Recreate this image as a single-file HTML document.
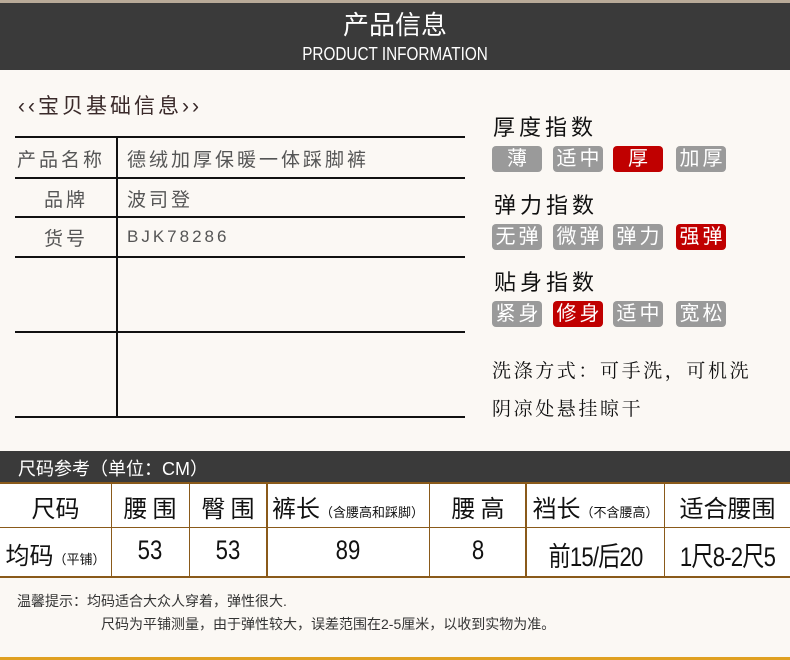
<!DOCTYPE html>
<html><head><meta charset="utf-8"><style>
*{margin:0;padding:0;box-sizing:border-box}
body{width:790px;height:660px;background:#fbf8f4;position:relative;overflow:hidden;font-family:"Liberation Sans","Noto Sans CJK SC",sans-serif}
.a{position:absolute;white-space:nowrap}
.hl{position:absolute;height:2px;background:#111}
.vl{position:absolute;width:2px;background:#111}
.tag{position:absolute;width:50px;height:26px;border-radius:4px;background:#9a9a9a;color:#fff;font-size:20px;line-height:26px;text-align:center;letter-spacing:3px;padding-left:3px}
.r{background:#c00000}
.tt{position:absolute;font-size:22px;letter-spacing:4px;color:#111}
.bh{position:absolute;background:#8a5a1a}
.c{position:absolute;text-align:center;font-size:24px;color:#111;white-space:nowrap}
.n{font-size:27px;transform:scaleX(.82)}
.s{font-size:13px}
</style></head><body>
<div class="a" style="left:0;top:0;width:790px;height:3px;background:#b8aa98"></div>
<div class="a" style="left:0;top:3px;width:790px;height:67px;background:#3a3a3a"></div>
<div class="a" style="left:0;top:5px;width:790px;text-align:center;color:#fff;font-size:26px">产品信息</div>
<div class="a" style="left:0;top:44px;width:790px;text-align:center;color:#fff;font-size:18px;transform:scaleX(.85)">PRODUCT INFORMATION</div>

<div class="a" style="left:18px;top:90px;font-size:21px;color:#3a2a2a;letter-spacing:3px">‹‹宝贝基础信息››</div>

<div class="hl" style="left:15px;top:136px;width:450px"></div>
<div class="hl" style="left:15px;top:177px;width:450px"></div>
<div class="hl" style="left:15px;top:216px;width:450px"></div>
<div class="hl" style="left:15px;top:256px;width:450px"></div>
<div class="hl" style="left:15px;top:331px;width:450px"></div>
<div class="hl" style="left:15px;top:416px;width:450px"></div>
<div class="vl" style="left:116px;top:136px;height:282px"></div>
<div class="a" style="left:17px;top:145px;font-size:19px;color:#555;letter-spacing:3px">产品名称</div>
<div class="a" style="left:127px;top:145px;font-size:19px;color:#555;letter-spacing:3px">德绒加厚保暖一体踩脚裤</div>
<div class="a" style="left:44px;top:185px;font-size:19px;color:#555;letter-spacing:3px">品牌</div>
<div class="a" style="left:127px;top:185px;font-size:19px;color:#555;letter-spacing:3px">波司登</div>
<div class="a" style="left:44px;top:224px;font-size:19px;color:#555;letter-spacing:3px">货号</div>
<div class="a" style="left:127px;top:227px;font-size:17px;color:#555;letter-spacing:3px">BJK78286</div>

<div class="tt" style="left:493px;top:110px">厚度指数</div>
<div class="tag" style="left:492px;top:146px">薄</div>
<div class="tag" style="left:553px;top:146px">适中</div>
<div class="tag r" style="left:613px;top:146px">厚</div>
<div class="tag" style="left:676px;top:146px">加厚</div>
<div class="tt" style="left:494px;top:188px">弹力指数</div>
<div class="tag" style="left:492px;top:224px">无弹</div>
<div class="tag" style="left:553px;top:224px">微弹</div>
<div class="tag" style="left:613px;top:224px">弹力</div>
<div class="tag r" style="left:676px;top:224px">强弹</div>
<div class="tt" style="left:494px;top:265px">贴身指数</div>
<div class="tag" style="left:492px;top:301px">紧身</div>
<div class="tag r" style="left:553px;top:301px">修身</div>
<div class="tag" style="left:613px;top:301px">适中</div>
<div class="tag" style="left:676px;top:301px">宽松</div>
<div class="a" style="left:492px;top:356px;font-family:'Liberation Serif','Noto Serif CJK SC',serif;font-size:19px;letter-spacing:2.6px;color:#111">洗涤方式：可手洗，可机洗</div>
<div class="a" style="left:492px;top:394px;font-family:'Liberation Serif','Noto Serif CJK SC',serif;font-size:19px;letter-spacing:2.6px;color:#111">阴凉处悬挂晾干</div>

<div class="a" style="left:0;top:451px;width:790px;height:31px;background:#3a3a3a"></div>
<div class="a" style="left:18px;top:455px;color:#fff;font-size:18px">尺码参考（单位：CM）</div>
<div class="a" style="left:0;top:482px;width:790px;height:95px;background:#fff"></div>
<div class="bh" style="left:0;top:482px;width:790px;height:2px"></div>
<div class="bh" style="left:0;top:527px;width:790px;height:1px"></div>
<div class="bh" style="left:0;top:576px;width:790px;height:2px"></div>
<div class="bh" style="left:111px;top:482px;width:1px;height:95px"></div>
<div class="bh" style="left:189px;top:482px;width:1px;height:95px"></div>
<div class="bh" style="left:266px;top:482px;width:2px;height:95px"></div>
<div class="bh" style="left:429px;top:482px;width:1px;height:95px"></div>
<div class="bh" style="left:525px;top:482px;width:2px;height:95px"></div>
<div class="bh" style="left:664px;top:482px;width:1px;height:95px"></div>
<div class="c" style="left:0;top:489px;width:111px">尺码</div>
<div class="c" style="left:111px;top:489px;width:78px;letter-spacing:5px;padding-left:5px">腰围</div>
<div class="c" style="left:189px;top:489px;width:78px;letter-spacing:5px;padding-left:5px">臀围</div>
<div class="c" style="left:267px;top:489px;width:162px">裤长<span class="s">（含腰高和踩脚）</span></div>
<div class="c" style="left:430px;top:489px;width:96px;letter-spacing:5px;padding-left:5px">腰高</div>
<div class="c" style="left:527px;top:489px;width:137px">裆长<span class="s">（不含腰高）</span></div>
<div class="c" style="left:665px;top:489px;width:125px">适合腰围</div>
<div class="c" style="left:0;top:536px;width:111px">均码<span class="s">（平铺）</span></div>
<div class="c n" style="left:111px;top:535px;width:78px">53</div>
<div class="c n" style="left:189px;top:535px;width:78px">53</div>
<div class="c n" style="left:267px;top:535px;width:162px">89</div>
<div class="c n" style="left:430px;top:535px;width:96px">8</div>
<div class="c n" style="left:517px;top:535px;width:157px;letter-spacing:-1px">前15/后20</div>
<div class="c n" style="left:655px;top:535px;width:145px;letter-spacing:-1px">1尺8-2尺5</div>

<div class="a" style="left:17px;top:591px;font-size:14px;color:#333">温馨提示：均码适合大众人穿着，弹性很大.</div>
<div class="a" style="left:101px;top:614px;font-size:14px;color:#333">尺码为平铺测量，由于弹性较大，误差范围在2-5厘米，以收到实物为准。</div>
<div class="a" style="left:0;top:657px;width:790px;height:3px;background:#e0a020"></div>
</body></html>
